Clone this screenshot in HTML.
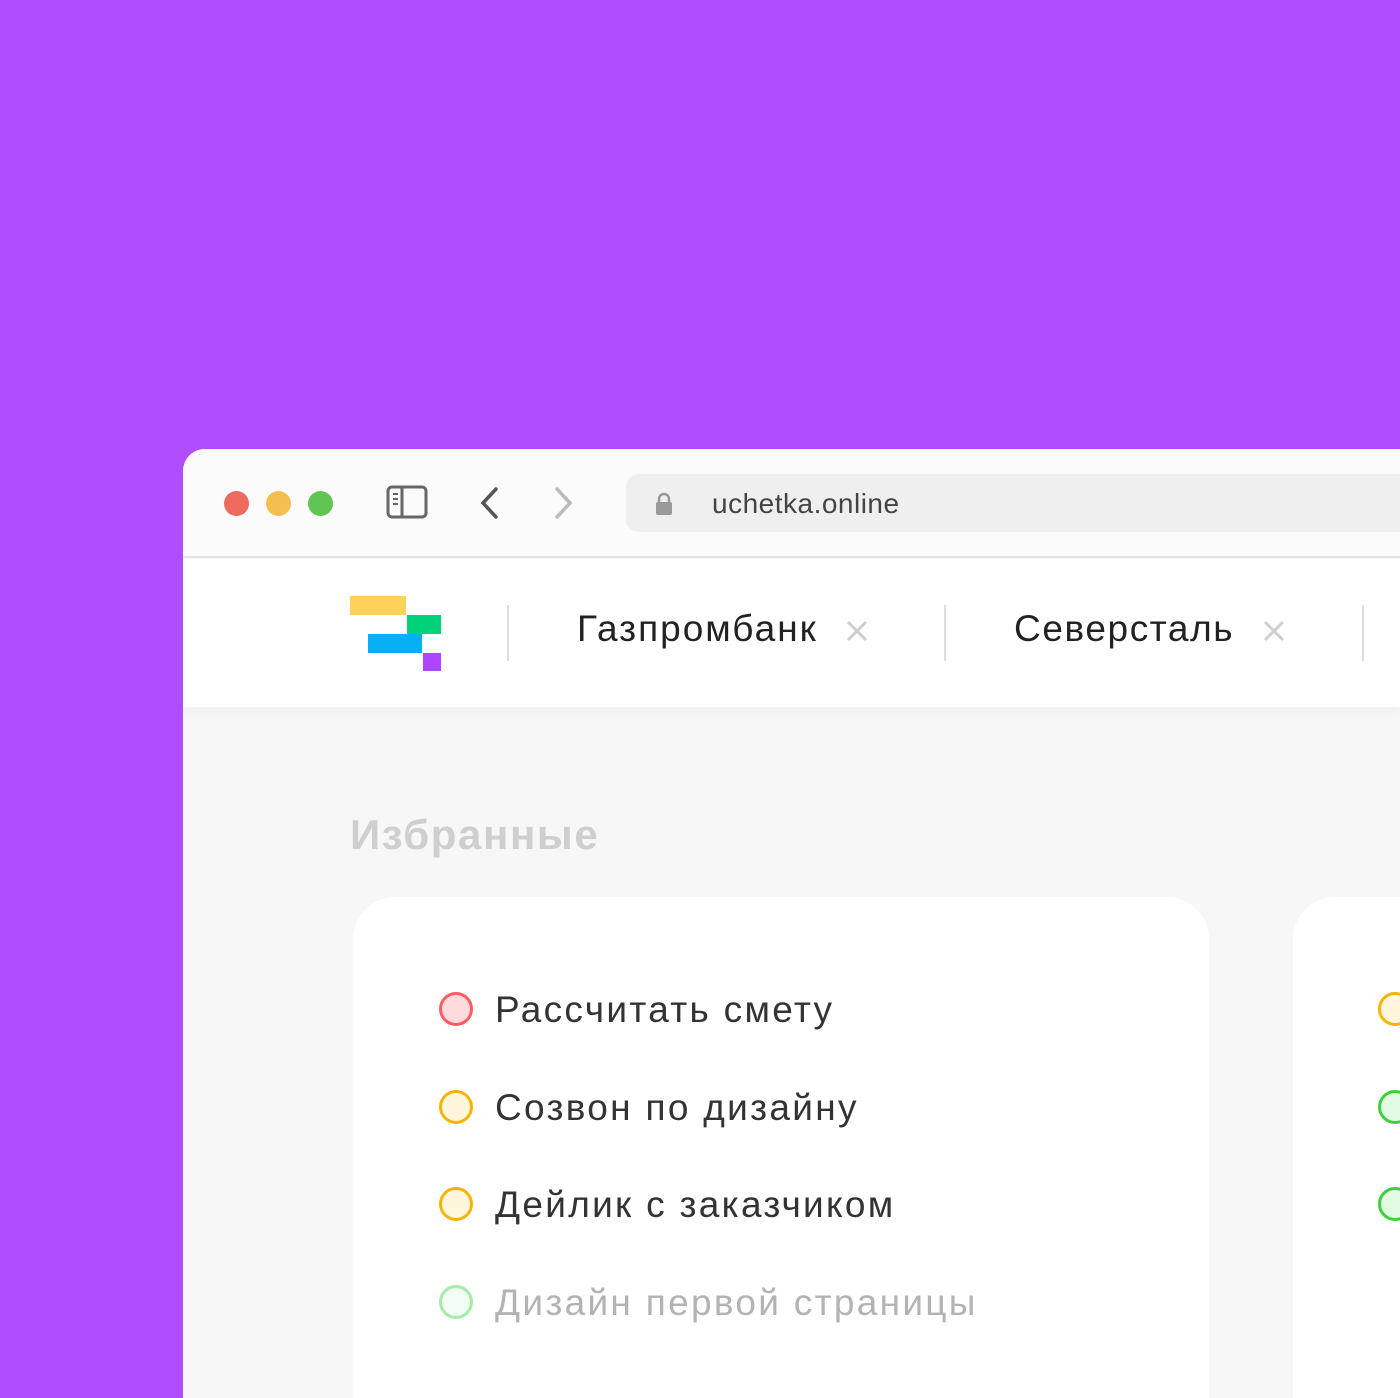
<!DOCTYPE html>
<html><head><meta charset="utf-8"><style>
*{margin:0;padding:0;box-sizing:border-box}
html,body{width:1400px;height:1398px;overflow:hidden}
body{background:#b04dff;position:relative;font-family:"Liberation Sans","DejaVu Sans",sans-serif}
.win{position:absolute;left:183px;top:449px;width:1217px;height:949px;background:#f7f7f7;border-top-left-radius:22px;overflow:hidden}
.bar{position:absolute;left:0;top:0;width:100%;height:109px;background:#fbfbfb;border-bottom:2px solid #e3e3e3}
.dot{position:absolute;top:42px;width:25px;height:25px;border-radius:50%}
.url{position:absolute;left:443px;top:25px;width:774px;height:58px;background:#efefef;border-radius:13px 0 0 13px}
.url span{position:absolute;left:86px;top:14px;font-size:28px;color:#444;letter-spacing:0.5px}
.tabs{position:absolute;left:0;top:110px;width:100%;height:148px;background:#fff;box-shadow:0 4px 12px rgba(0,0,0,.03)}
.sep{position:absolute;top:46px;width:2px;height:56px;background:#ddd}
.tab{position:absolute;top:49px;font-size:37px;color:#222}
.x{position:absolute;top:61px}
.h{position:absolute;left:167px;top:362px;font-size:42px;font-weight:bold;color:#cfcfcf;letter-spacing:1.6px}
.card{position:absolute;top:448px;background:#fff;border-radius:42px 42px 0 0;height:501px}
.it{position:absolute;font-size:37px;color:#333;white-space:nowrap;letter-spacing:2.3px}
.c{position:absolute;width:34px;height:34px;border-radius:50%;border:3px solid}
</style></head><body>
<div class="win">
 <div class="bar">
  <div class="dot" style="left:41px;background:#ec6a5e"></div>
  <div class="dot" style="left:83px;background:#f4bf4f"></div>
  <div class="dot" style="left:125px;background:#61c554"></div>
  <svg style="position:absolute;left:203px;top:36px" width="42" height="34" viewBox="0 0 42 34"><rect x="2" y="2" width="38" height="30" rx="4" fill="none" stroke="#666" stroke-width="3"/><line x1="16" y1="2" x2="16" y2="32" stroke="#666" stroke-width="3"/><path d="M7 9h5M7 14h5M7 19h5" stroke="#666" stroke-width="2"/></svg>
  <svg style="position:absolute;left:295px;top:37px" width="24" height="34"><path d="M18 3L5 17L18 31" fill="none" stroke="#555" stroke-width="3.5" stroke-linecap="round"/></svg>
  <svg style="position:absolute;left:369px;top:37px" width="24" height="34"><path d="M5 3L18 17L5 31" fill="none" stroke="#bbb" stroke-width="3.5" stroke-linecap="round"/></svg>
  <div class="url"><svg style="position:absolute;left:28px;top:17px" width="20" height="26"><path d="M5 11V8a5 5 0 0 1 10 0v3" fill="none" stroke="#999" stroke-width="2.5"/><rect x="2" y="11" width="16" height="13" rx="2" fill="#999"/></svg><span>uchetka.online</span></div>
 </div>
 <div class="tabs">
  <div style="position:absolute;left:167px;top:37px;width:56px;height:19px;background:#ffd35a"></div>
  <div style="position:absolute;left:224px;top:56px;width:34px;height:19px;background:#00d27a"></div>
  <div style="position:absolute;left:185px;top:75px;width:54px;height:19px;background:#05b1f3"></div>
  <div style="position:absolute;left:240px;top:94px;width:18px;height:18px;background:#ac47ff"></div>
  <div class="sep" style="left:324px"></div>
  <div class="tab" style="left:394px;letter-spacing:2px">Газпромбанк</div>
  <svg class="x" style="left:663px" width="22" height="22"><path d="M2 2L20 20M20 2L2 20" stroke="#cfcfcf" stroke-width="3"/></svg>
  <div class="sep" style="left:761px"></div>
  <div class="tab" style="left:831px;letter-spacing:1.6px">Северсталь</div>
  <svg class="x" style="left:1080px" width="22" height="22"><path d="M2 2L20 20M20 2L2 20" stroke="#cfcfcf" stroke-width="3"/></svg>
  <div class="sep" style="left:1179px"></div>
 </div>
 <div class="h">Избранные</div>
 <div class="card" style="left:170px;width:856px">
  <div class="c" style="left:86px;top:95px;border-color:#ff5b63;background:#ffdbdd"></div><div class="it" style="left:142px;top:92px">Рассчитать смету</div>
  <div class="c" style="left:86px;top:193px;border-color:#f7b500;background:#fff6dc"></div><div class="it" style="left:142px;top:190px">Созвон по дизайну</div>
  <div class="c" style="left:86px;top:290px;border-color:#f7b500;background:#fff6dc"></div><div class="it" style="left:142px;top:287px">Дейлик с заказчиком</div>
  <div class="c" style="left:86px;top:388px;border-color:#a6eba6;background:#f3fdf3"></div><div class="it" style="left:142px;top:385px;color:#b3b3b3">Дизайн первой страницы</div>
 </div>
 <div class="card" style="left:1110px;width:107px;border-radius:42px 0 0 0">
  <div class="c" style="left:85px;top:95px;border-color:#f7b500;background:#fff6dc"></div>
  <div class="c" style="left:85px;top:193px;border-color:#3ecf3e;background:#e3fbe3"></div>
  <div class="c" style="left:85px;top:290px;border-color:#3ecf3e;background:#e3fbe3"></div>
 </div>
</div>
</body></html>
